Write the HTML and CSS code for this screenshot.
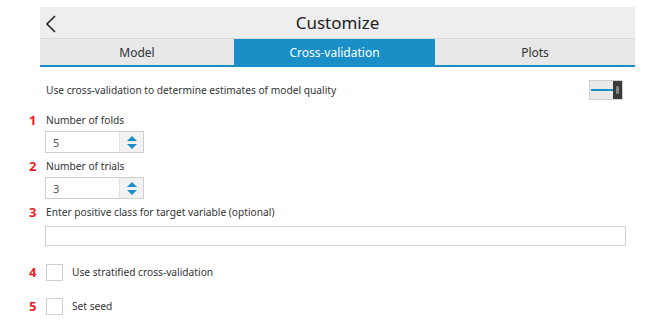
FILE: index.html
```html
<!DOCTYPE html>
<html lang="en">
<head>
  <meta charset="UTF-8">
  <title>Customize</title>
  <link rel="stylesheet" href="styles.css">
</head>
<body>
  <div class="panel">
    <div class="titlebar">
      <svg class="back" width="12" height="18" viewBox="0 0 12 18">
        <path d="M10 1 L2 9 L10 17" fill="none" stroke="#222" stroke-width="1.6"/>
      </svg>
      <span class="title">Customize</span>
    </div>
    <div class="tabs">
      <div class="tab">Model</div>
      <div class="tab active">Cross-validation</div>
      <div class="tab">Plots</div>
    </div>
  </div>

  <div class="content">
    <div class="row toggle-row">
      <span></span>
      <div class="line">
        <span>Use cross-validation to determine estimates of model quality</span>
        <div class="toggle"><div class="knob"></div></div>
      </div>
    </div>

    <div class="row label-row first">
      <span class="num">1</span>
      <span>Number of folds</span>
    </div>
    <div class="row field-row">
      <span></span>
      <div class="spinner">
        <span class="val">5</span>
        <div class="arrows"><span class="up"></span><span class="down"></span></div>
      </div>
    </div>

    <div class="row label-row">
      <span class="num">2</span>
      <span>Number of trials</span>
    </div>
    <div class="row field-row">
      <span></span>
      <div class="spinner">
        <span class="val">3</span>
        <div class="arrows"><span class="up"></span><span class="down"></span></div>
      </div>
    </div>

    <div class="row label-row">
      <span class="num">3</span>
      <span>Enter positive class for target variable (optional)</span>
    </div>
    <div class="row text-row">
      <span></span>
      <div class="textbox"></div>
    </div>

    <div class="row check-row first-check">
      <span class="num">4</span>
      <div class="check"><span class="box"></span><span>Use stratified cross-validation</span></div>
    </div>
    <div class="row check-row">
      <span class="num">5</span>
      <div class="check"><span class="box"></span><span>Set seed</span></div>
    </div>
  </div>
</body>
</html>
```

FILE: styles.css
```css
* { box-sizing: border-box; }

body {
  margin: 0;
  background: #fff;
  font-family: 'Noto Sans', sans-serif;
  color: #333;
  font-size: 10.2px;
}

.panel {
  margin: 7px 0 0 40px;
  width: 595px;
}

.titlebar {
  height: 32px;
  background: #eeeeee;
  display: flex;
  align-items: center;
  justify-content: center;
  position: relative;
  border-bottom: 1px solid #d9d9d9;
}

.back {
  position: absolute;
  left: 5px;
  top: 8px;
}

.title {
  font-size: 17px;
  color: #222;
}

.tabs {
  display: grid;
  grid-template-columns: 194px 201px 200px;
  height: 28px;
  background: #e8e8e8;
  border-bottom: 2px solid #1a8fc7;
}

.tab {
  display: flex;
  align-items: center;
  justify-content: center;
  font-size: 12px;
  color: #333;
}

.tab.active {
  background: #1a8fc7;
  color: #fff;
}

.content {
  padding-left: 24px;
  width: 626px;
}

.row {
  display: grid;
  grid-template-columns: 21px 1fr;
  align-items: center;
}

.num {
  color: #ee1c24;
  font-weight: bold;
  font-size: 13px;
  padding-left: 5px;
}

.toggle-row {
  margin-top: 13px;
  height: 20px;
}

.line {
  display: flex;
  justify-content: space-between;
  align-items: center;
  padding-left: 1px;
}

.toggle {
  width: 34px;
  height: 20px;
  margin-right: 3px;
  background: #e9e9e9;
  border: 1px solid #d0d0d0;
  position: relative;
  display: flex;
  align-items: center;
  justify-content: flex-end;
}

.toggle::before {
  content: '';
  position: absolute;
  left: 1px;
  right: 9px;
  top: 8px;
  height: 2px;
  background: #1a8fc7;
}

.knob {
  width: 9px;
  height: 18px;
  background: #3a3a3a;
  position: relative;
}

.knob::after {
  content: '';
  position: absolute;
  left: 3px;
  top: 5px;
  width: 3px;
  height: 8px;
  border-radius: 2px;
  background: #888;
}

.label-row {
  height: 16px;
  margin-top: 4px;
}

.label-row.first {
  margin-top: 11px;
}

.label-row span:last-child {
  padding-left: 1px;
}

.field-row {
  margin-top: 4px;
}

.spinner {
  width: 99px;
  height: 22px;
  border: 1px solid #cfcfcf;
  background: #fff;
  display: flex;
  align-items: center;
}

.val {
  flex: 1;
  padding-left: 7px;
  color: #555;
  font-size: 11px;
}

.arrows {
  width: 24px;
  height: 20px;
  background: #f2f2f2;
  border-left: 1px solid #e2e2e2;
  display: flex;
  flex-direction: column;
  align-items: center;
  justify-content: center;
  gap: 3px;
}

.up, .down {
  width: 0;
  height: 0;
  border-left: 5px solid transparent;
  border-right: 5px solid transparent;
}

.up { border-bottom: 5px solid #1a8fc7; }
.down { border-top: 5px solid #1a8fc7; }

.text-row {
  margin-top: 7px;
}

.textbox {
  height: 20px;
  border: 1px solid #cfcfcf;
  background: #fff;
}

.check-row {
  height: 18px;
  margin-top: 16px;
}

.check-row.first-check {
  margin-top: 17px;
}

.check {
  display: flex;
  align-items: center;
  gap: 9px;
  padding-left: 1px;
}

.box {
  width: 17px;
  height: 17px;
  border: 1px solid #cfcfcf;
  background: #fff;
}
```
